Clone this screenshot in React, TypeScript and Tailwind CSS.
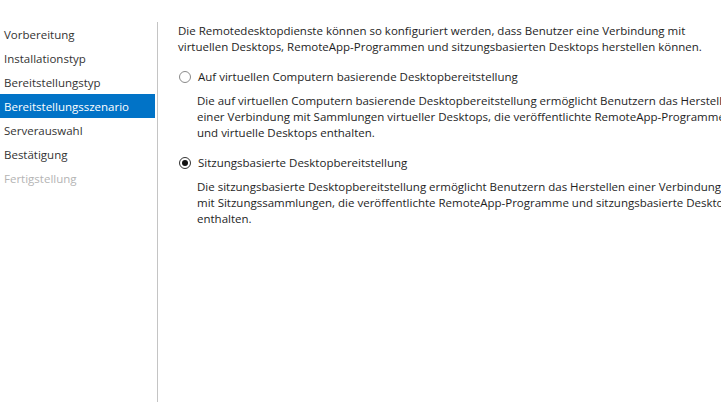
import React from "react";

const steps = [
  { label: "Vorbereitung", state: "done" },
  { label: "Installationstyp", state: "done" },
  { label: "Bereitstellungstyp", state: "done" },
  { label: "Bereitstellungsszenario", state: "active" },
  { label: "Serverauswahl", state: "todo" },
  { label: "Bestätigung", state: "todo" },
  { label: "Fertigstellung", state: "disabled" },
];

function Radio({ checked }: { checked?: boolean }) {
  return (
    <span
      className={`flex h-[12px] w-[12px] shrink-0 items-center justify-center rounded-full border bg-white ${
        checked ? "border-[#333]" : "border-[#8a8a8a]"
      }`}
    >
      {checked && <span className="h-[6px] w-[6px] rounded-full bg-[#111]" />}
    </span>
  );
}

function Option({ checked, title, lines }: { checked?: boolean; title: string; lines: string[] }) {
  return (
    <div className="flex flex-col">
      <label className="flex h-4 items-center gap-[7px] pl-[1px]">
        <Radio checked={checked} />
        <span>{title}</span>
      </label>
      <div className="mt-2 pl-[19px]">
        {lines.map((l) => (
          <div key={l} className="whitespace-nowrap">
            {l}
          </div>
        ))}
      </div>
    </div>
  );
}

export default function App() {
  return (
    <div
      className="flex h-[402px] w-[721px] overflow-hidden bg-white text-[11.5px] leading-4 text-[#1e1e1e]"
      style={{ fontFamily: '"Open Sans", "Noto Sans", sans-serif' }}
    >
      <nav className="flex w-[157px] shrink-0 flex-col pt-[22px]">
        {steps.map((s) => (
          <div
            key={s.label}
            className={`mr-[2px] h-6 whitespace-nowrap pl-1 pt-px leading-6 ${
              s.state === "active"
                ? "bg-[#0173c7] text-white"
                : s.state === "disabled"
                ? "text-[#b4b4b4]"
                : "text-[#333]"
            }`}
          >
            {s.label}
          </div>
        ))}
      </nav>
      <div className="mt-[22px] w-px shrink-0 bg-[#c4c4c4]" />
      <main className="flex min-w-0 flex-1 flex-col gap-[14px] pl-5 pt-[23px]">
        <div>
          <div className="whitespace-nowrap">
            Die Remotedesktopdienste können so konfiguriert werden, dass Benutzer eine Verbindung mit
          </div>
          <div className="whitespace-nowrap">
            virtuellen Desktops, RemoteApp-Programmen und sitzungsbasierten Desktops herstellen können.
          </div>
        </div>
        <Option
          title="Auf virtuellen Computern basierende Desktopbereitstellung"
          lines={[
            "Die auf virtuellen Computern basierende Desktopbereitstellung ermöglicht Benutzern das Herstellen",
            "einer Verbindung mit Sammlungen virtueller Desktops, die veröffentlichte RemoteApp-Programme",
            "und virtuelle Desktops enthalten.",
          ]}
        />
        <Option
          checked
          title="Sitzungsbasierte Desktopbereitstellung"
          lines={[
            "Die sitzungsbasierte Desktopbereitstellung ermöglicht Benutzern das Herstellen einer Verbindung",
            "mit Sitzungssammlungen, die veröffentlichte RemoteApp-Programme und sitzungsbasierte Desktops",
            "enthalten.",
          ]}
        />
      </main>
    </div>
  );
}
